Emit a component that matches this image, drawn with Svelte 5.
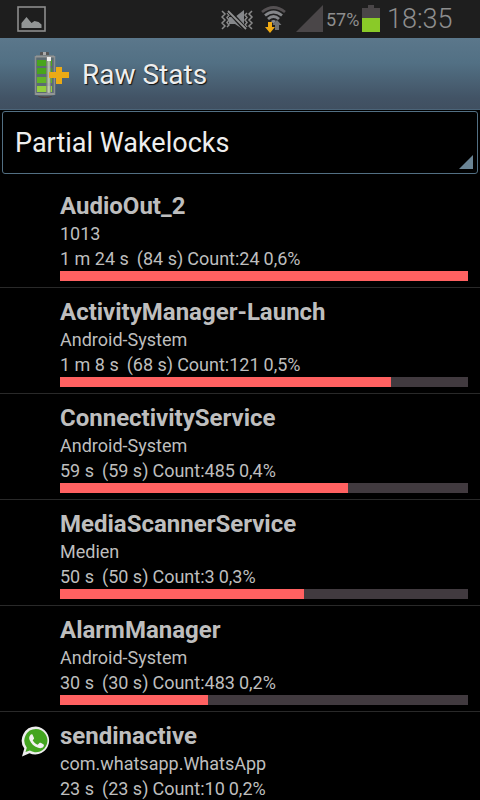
<script lang="ts">
  type Stat = {
    name: string;
    owner: string;
    time: string;
    seconds: number;
    count: number;
    percent: string;
    whatsapp?: boolean;
  };

  const BAR_WIDTH = 408;

  const stats: (Stat & { bar: number })[] = [
    { name: 'AudioOut_2', owner: '1013', time: '1 m 24 s', seconds: 84, count: 24, percent: '0,6%', bar: 408 },
    { name: 'ActivityManager-Launch', owner: 'Android-System', time: '1 m 8 s', seconds: 68, count: 121, percent: '0,5%', bar: 331 },
    { name: 'ConnectivityService', owner: 'Android-System', time: '59 s', seconds: 59, count: 485, percent: '0,4%', bar: 288 },
    { name: 'MediaScannerService', owner: 'Medien', time: '50 s', seconds: 50, count: 3, percent: '0,3%', bar: 244 },
    { name: 'AlarmManager', owner: 'Android-System', time: '30 s', seconds: 30, count: 483, percent: '0,2%', bar: 148 },
    { name: 'sendinactive', owner: 'com.whatsapp.WhatsApp', time: '23 s', seconds: 23, count: 10, percent: '0,2%', bar: 112, whatsapp: true }
  ];
</script>

<div class="screen">
  <div class="status-bar">
    <svg class="picture" width="30" height="28" viewBox="0 0 30 28">
      <rect x="1" y="1" width="27" height="24" fill="none" stroke="#8c8c8c" stroke-width="1.6" />
      <path d="M4.500 22v-5l5-6 5 6 3-2 4 1 3 2.500v3.500z" fill="#929595" />
    </svg>

    <svg class="vibrate" width="34" height="24" viewBox="0 0 34 24">
      <g fill="none" stroke="#8a8a8a" stroke-width="1.500">
        <path d="M1 2l3 3-3 3 3 3-3 3 3 3-3 3M6 4l2 2-2 2.500 2 2.500-2 2.500 2 2.500-2 2" />
        <path d="M31 2l-3 3 3 3-3 3 3 3-3 3 3 3M26 4l-2 2 2 2.500-2 2.500 2 2.500-2 2.500 2 2" />
      </g>
      <path d="M8 8h6l9-7v20l-9-6H8z" fill="#85878a" />
      <path d="M7 1l18 20" stroke="#1e1e1e" stroke-width="4.500" />
      <path d="M7 2l18 18" stroke="#929292" stroke-width="1.800" />
    </svg>

    <svg class="wifi" width="28" height="30" viewBox="0 0 28 30">
      <g fill="none" stroke-width="2.800">
        <path d="M2 7q11.500-9 23 0" stroke="#555153" />
        <path d="M5 10.500q8.500-7 17 0" stroke="#85878a" />
        <path d="M8 14q5.500-5 11 0" stroke="#85878a" />
      </g>
      <path d="M11 16q2.500-2 5 0l-2.500 3z" fill="#85878a" />
      <path d="M8 17h4v5h3l-5 6-5-6h3z" fill="#f0aa14" />
      <path d="M15 25v-5h-2.500l4.500-5 4.500 5H19v5z" fill="#707274" />
    </svg>

    <svg class="signal" width="27" height="27" viewBox="0 0 27 27">
      <path d="M0 27L27 0v27z" fill="#4a4648" />
    </svg>
    <span class="charge">57%</span>
    <svg class="battery" width="18" height="27" viewBox="0 0 18 27">
      <path d="M6 0h6v3h6v10H0V3h6z" fill="#4a4648" />
      <path d="M0 13h18v14H0z" fill="#8aca28" />
    </svg>
    <span class="clock">18:35</span>
  </div>

  <header>
    <svg class="logo" width="36" height="48" viewBox="0 0 36 48">
      <defs>
        <linearGradient id="metal">
          <stop offset="0" stop-color="#6c6c6c" />
          <stop offset=".6" stop-color="#d8d8d8" />
          <stop offset="1" stop-color="#666" />
        </linearGradient>
      </defs>
      <ellipse cx="11" cy="45" rx="7" ry="2" fill="#493e42" />
      <rect x="6" y="1" width="9" height="5" rx="1" fill="#555" />
      <rect x="9" y="1" width="3" height="4" fill="#aaa" />
      <path d="M1 5q10-2 20 0v39q-10 3-20 0z" fill="#5b6b72" />
      <path d="M1.500 5v39M20.500 5v39" stroke="#8c8f90" stroke-width="1.500" />
      <path d="M3 9h15v6H3zM3 17h15v6H3z" fill="#48a51c" />
      <path d="M3 26h15v6H3z" fill="#62b427" />
      <path d="M3 35h15v6H3z" fill="#94ce3e" />
      <path d="M12 6h5v37h-5z" fill="url(#metal)" opacity=".8" />
      <path d="M2 5.500h18M2 43h18" stroke="#939696" stroke-width="2" />
      <path d="M13 6h4v4h-4z" fill="#eee" />
      <path d="M22 16h6v5h7v6h-7v6h-6v-6h-7v-6h7z" fill="#eaaa15" />
    </svg>
    <h1>Raw Stats</h1>
  </header>

  <div class="spinner">
    <span>Partial Wakelocks</span>
    <svg width="14" height="14" viewBox="0 0 14 14">
      <path d="M0 14L14 0v14z" fill="#6a8495" />
    </svg>
  </div>

  <ul>
    {#each stats as stat}
      <li>
        <div class="icon">
          {#if stat.whatsapp}
            <svg width="30" height="31" viewBox="0 0 30 31">
              <path d="M15 .5a14 14 0 1 1-6.500 26.800L1 30.500l2.300-8A14 14 0 0 1 15 .5z" fill="#ededed" />
              <path d="M15 3a11.600 11.600 0 1 1-6.200 21.500L4.500 26l1.300-4.300A11.600 11.600 0 0 1 15 3z" fill="#43a520" />
              <path d="M9 9.500c1.200-1.700 2.500-1.500 3 .2l1 2.300c.3.900-.8 1.700-1.300 2.300 1.200 2.200 2.800 3.600 5 4.500l1.700-1.800c.6-.5 1.100-.2 1.700.1l2.200 1.200c1 .6.700 1.600.1 2.400-1.200 1.500-3.200 1.800-5.200 1.100-4.500-1.500-7-4-8.600-7.800-.7-1.800-.5-3.300.4-4.500z" fill="#f2f2f2" />
            </svg>
          {/if}
        </div>
        <div class="info">
          <h2>{stat.name}</h2>
          <p>{stat.owner}</p>
          <p class="usage">
            <span>{stat.time}</span>
            <span class="total">({stat.seconds} s)</span>
            <span class="count">Count:{stat.count}</span>
            <span class="percent">{stat.percent}</span>
          </p>
          <div class="track">
            <div class="fill" style="width: {(stat.bar / BAR_WIDTH) * 100}%"></div>
          </div>
        </div>
      </li>
    {/each}
  </ul>
</div>

<style>
  :global(body) {
    background: #000;
    overflow: hidden;
  }

  .screen {
    width: 480px;
    height: 800px;
    overflow: hidden;
    background: #000;
    color: #bebebe;
    font-family: Roboto, sans-serif;
  }

  .status-bar {
    display: flex;
    align-items: flex-start;
    box-sizing: border-box;
    height: 38px;
    padding-left: 17px;
    background: #1e1e1e;
    color: #8e8e8e;
  }

  .status-bar svg,
  .status-bar span {
    flex: none;
  }

  .picture {
    margin-top: 6px;
  }

  .vibrate {
    margin: 9px 0 0 174px;
  }

  .wifi {
    margin: 5px 0 0 5px;
  }

  .signal {
    margin: 5px 0 0 8px;
  }

  .charge {
    width: 36px;
    margin-left: 3px;
    font-size: 18px;
    line-height: 40px;
  }

  .battery {
    margin-top: 5px;
  }

  .clock {
    margin-left: 7px;
    font-size: 27px;
    font-weight: 300;
    line-height: 38px;
  }

  header {
    display: flex;
    align-items: flex-start;
    box-sizing: border-box;
    height: 72px;
    padding-left: 34px;
    background: linear-gradient(#5b778b, #527084 35%, #425365 85%, #405061);
    border-bottom: 1px solid #4b6478;
  }

  .logo {
    margin-top: 13px;
  }

  h1 {
    margin: 0 0 0 12px;
    color: #eee;
    font-size: 28px;
    font-weight: 400;
    line-height: 74px;
    text-shadow: 1px 1px 1px #111;
  }

  .spinner {
    display: flex;
    align-items: center;
    justify-content: space-between;
    box-sizing: border-box;
    height: 63px;
    margin: 1px 2px 0;
    padding: 0 4px 0 12px;
    border: 1px solid #526f83;
    border-radius: 3px;
    color: #eee;
    font-size: 27px;
  }

  .spinner svg {
    align-self: flex-end;
    margin-bottom: 4px;
  }

  ul {
    margin: 8px 0 0;
    padding: 0;
    list-style: none;
  }

  li {
    display: flex;
    box-sizing: border-box;
    height: 106px;
    border-bottom: 1px solid #292929;
  }

  .icon {
    width: 39px;
    padding: 14px 0 0 21px;
  }

  .info {
    width: 408px;
  }

  h2 {
    margin: 0;
    padding-top: 9px;
    font-size: 24px;
    font-weight: 700;
    line-height: 30px;
  }

  p {
    margin: 0;
    font-size: 18px;
    line-height: 25px;
    white-space: nowrap;
  }

  .icon,
  .info {
    flex: none;
    box-sizing: border-box;
  }

  .icon {
    width: 60px;
  }

  .usage {
    display: flex;
  }

  .total {
    margin-left: 8px;
  }

  .count {
    margin-left: 4px;
  }

  .percent {
    margin-left: 4px;
  }

  .track {
    height: 10px;
    background: #413a3f;
  }

  .fill {
    height: 10px;
    background: #ff6161;
  }
</style>
